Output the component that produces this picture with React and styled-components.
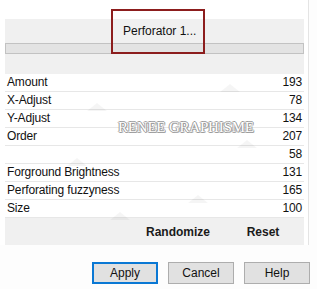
import React from 'react';
import styled, { createGlobalStyle } from 'styled-components';

const GlobalStyle = createGlobalStyle`
    html, body {
        margin: 0;
        padding: 0;
        background: #fdfdfd;
        font-family: 'Liberation Sans', Arial, sans-serif;
        font-size: 12px;
        color: #111111;
    }
`;

const Window = styled.div`
    width: 317px;
    height: 289px;
    display: flex;
    flex-direction: column;
    box-sizing: border-box;
`;

const Upper = styled.div`
    width: 309px;
    height: 245px;
    box-sizing: border-box;
    padding: 19px 4px 0 5px;
    border-right: 1px solid #e4e4e4;
    background: #ffffff;
`;

const Panel = styled.div`
    position: relative;
    height: 100%;
    background: #f0f0f0;
    display: flex;
    flex-direction: column;
`;

const Header = styled.div`
    height: 55px;
    box-sizing: border-box;
    padding-top: 24px;
`;

const Bar = styled.div`
    height: 11px;
    box-sizing: border-box;
    border: 1px solid #c2c2c2;
    background: #e3e3e3;
`;

const TitleBox = styled.div`
    position: absolute;
    left: 106px;
    top: -10px;
    width: 94px;
    height: 45px;
    box-sizing: border-box;
    border: 2px solid #8c1d1d;
    padding: 13px 0 0 10px;
    line-height: 14px;
    font-size: 12px;
    color: #111111;
`;

const List = styled.div`
    background: #ffffff;
    display: flex;
    flex-direction: column;
`;

const Row = styled.div`
    height: 18px;
    box-sizing: border-box;
    border-bottom: 1px solid #e7e7e7;
    display: flex;
    align-items: center;
    justify-content: space-between;
    padding: 0 2px 0 2px;
    line-height: 17px;
    letter-spacing: -0.15px;
`;

const Label = styled.span`
    color: #111111;
`;

const Value = styled.span`
    color: #111111;
`;

const Actions = styled.div`
    flex: 1;
    display: flex;
    justify-content: flex-end;
    align-items: center;
    gap: 5px;
    padding-right: 1px;
`;

const ActionButton = styled.div`
    width: 80px;
    text-align: center;
    font-weight: bold;
    font-size: 12px;
    color: #1a1a1a;
`;

const Watermark = styled.div`
    position: absolute;
    left: 113px;
    top: 100px;
    font-family: 'Liberation Serif', 'Times New Roman', serif;
    font-size: 15px;
    letter-spacing: -0.2px;
    color: #ffffff;
    text-shadow: 1px 0 0 #9c9c9c, -1px 0 0 #9c9c9c, 0 1px 0 #9c9c9c, 0 -1px 0 #9c9c9c,
        1px 1px 0 #b4b4b4;
    pointer-events: none;
`;

const Marks = styled.svg`
    position: absolute;
    left: 0;
    top: 0;
    pointer-events: none;
`;

const Footer = styled.div`
    flex: 1;
    display: flex;
    justify-content: flex-end;
    align-items: flex-start;
    gap: 10px;
    padding: 17px 7px 0 0;
`;

const Button = styled.button`
    width: 66px;
    height: 22px;
    box-sizing: border-box;
    margin: 0;
    padding: 0;
    font-family: 'Liberation Sans', Arial, sans-serif;
    font-size: 12px;
    color: #111111;
    background: #e1e1e1;
    border: ${(p) => (p.$primary ? '2px solid #0a78d4' : '1px solid #adadad')};
`;

const rows = [
    ['Amount', '193'],
    ['X-Adjust', '78'],
    ['Y-Adjust', '134'],
    ['Order', '207'],
    ['', '58'],
    ['Forground Brightness', '131'],
    ['Perforating fuzzyness', '165'],
    ['Size', '100'],
];

// faint watermark triangles, coords relative to panel
const triangles = [
    [225, 65],
    [92, 84],
    [242, 121],
    [72, 139],
    [193, 176],
    [115, 193],
];

const App = () => {
    return (
        <>
            <GlobalStyle />
            <Window>
                <Upper>
                    <Panel>
                        <Header>
                            <Bar />
                        </Header>
                        <List>
                            {rows.map(([label, value], i) => (
                                <Row key={i}>
                                    <Label>{label}</Label>
                                    <Value>{value}</Value>
                                </Row>
                            ))}
                        </List>
                        <Actions>
                            <ActionButton>Randomize</ActionButton>
                            <ActionButton>Reset</ActionButton>
                        </Actions>
                        <Marks width="299" height="226">
                            {triangles.map(([x, y], i) => (
                                <polygon
                                    key={i}
                                    points={`${x - 10},${y + 8} ${x},${y} ${x + 10},${y + 8}`}
                                    fill="#000"
                                    opacity="0.04"
                                />
                            ))}
                        </Marks>
                        <Watermark>RENEE GRAPHISME</Watermark>
                        <TitleBox>Perforator 1...</TitleBox>
                    </Panel>
                </Upper>
                <Footer>
                    <Button $primary>Apply</Button>
                    <Button>Cancel</Button>
                    <Button>Help</Button>
                </Footer>
            </Window>
        </>
    );
};

export default App;
